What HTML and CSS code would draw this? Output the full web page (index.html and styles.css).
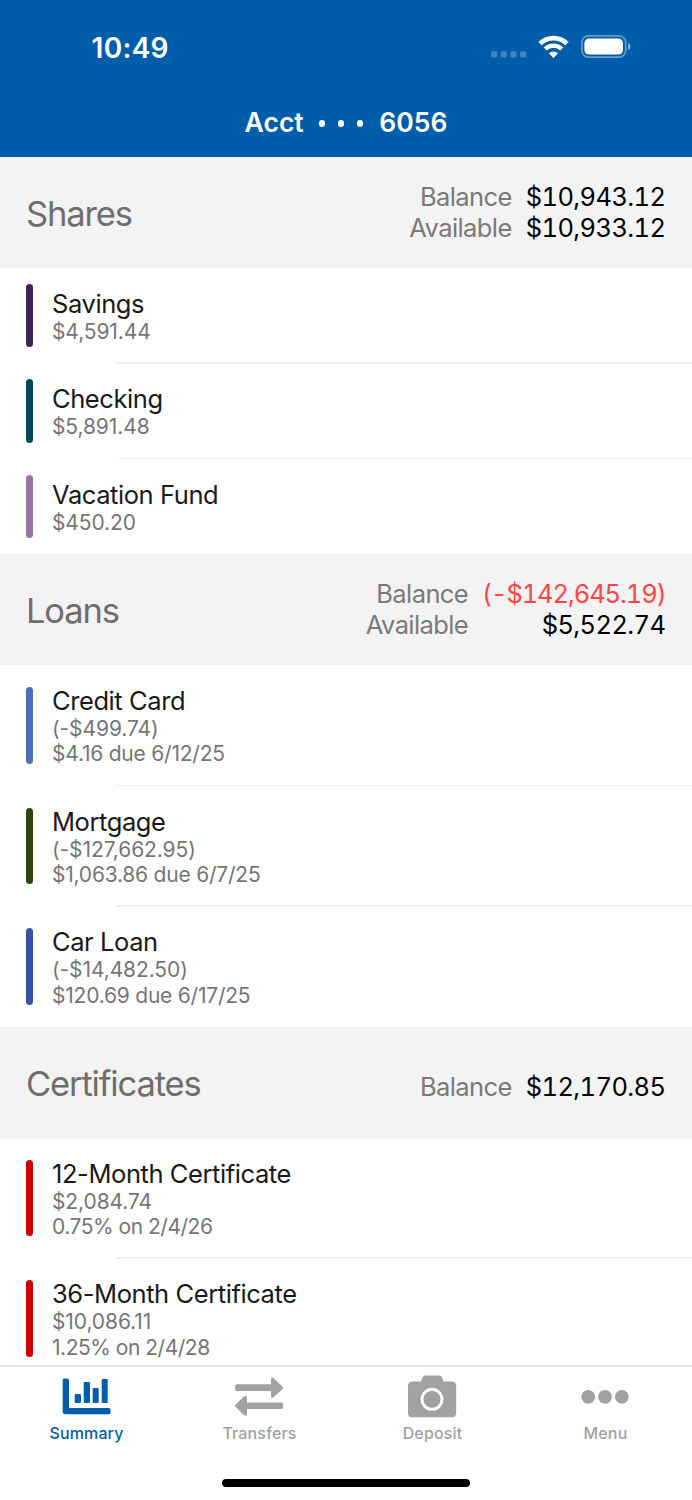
FILE: index.html
```html
<!DOCTYPE html>
<html lang="en">

<head>
    <meta charset="UTF-8">
    <meta name="viewport" content="width=device-width, initial-scale=1.0">
    <title>Account Summary</title>
    <link rel="stylesheet" href="styles.css">
</head>

<body>
    <header class="header">
        <div class="status-bar">
            <span class="time">10:49</span>
            <div class="status-icons">
                <svg class="signal" width="36" height="7" viewBox="0 0 36 7">
                    <rect x="0" y="0.3" width="6.3" height="6.3" rx="1.8"/>
                    <rect x="9.7" y="0.3" width="6.3" height="6.3" rx="1.8"/>
                    <rect x="19.4" y="0.3" width="6.3" height="6.3" rx="1.8"/>
                    <rect x="29.1" y="0.3" width="6.3" height="6.3" rx="1.8"/>
                </svg>
                <svg class="wifi" width="31" height="24" viewBox="0 0 31 24">
                    <path d="M2 8.6 A19.4 19.4 0 0 1 29 8.6" fill="none" stroke="#fff" stroke-width="4.8"/>
                    <path d="M7.2 14 A12 12 0 0 1 23.8 14" fill="none" stroke="#fff" stroke-width="4.4"/>
                    <path d="M10.9 18.3 Q15.5 14.6 20.1 18.3 L16.1 22.4 Q15.5 23 14.9 22.4 Z" fill="#fff"/>
                </svg>
                <svg class="battery" width="50" height="24" viewBox="0 0 50 24">
                    <rect x="0.9" y="0.9" width="43.8" height="21.3" rx="6.6" fill="none" stroke="#fff" stroke-opacity="0.4" stroke-width="1.7"/>
                    <rect x="3.4" y="3.6" width="38.6" height="16" rx="4.6" fill="#fff"/>
                    <path d="M47 8 Q49.4 8.8 49.4 11.5 Q49.4 14.4 47 15.2 Z" fill="#fff" fill-opacity="0.5"/>
                </svg>
            </div>
        </div>
        <h1 class="title"><span>Acct</span><span class="dots"><i></i><i></i><i></i></span><span>6056</span></h1>
    </header>

    <main class="accounts">
        <section>
            <div class="section-header">
                <h2>Shares</h2>
                <div class="totals">
                    <span class="label">Balance</span><span class="value">$10,943.12</span>
                    <span class="label">Available</span><span class="value">$10,933.12</span>
                </div>
            </div>
            <div class="row">
                <div class="bar savings"></div>
                <div class="info">
                    <h3>Savings</h3>
                    <p>$4,591.44</p>
                </div>
            </div>
            <div class="row">
                <div class="bar checking"></div>
                <div class="info">
                    <h3>Checking</h3>
                    <p>$5,891.48</p>
                </div>
            </div>
            <div class="row">
                <div class="bar vacation"></div>
                <div class="info">
                    <h3>Vacation Fund</h3>
                    <p>$450.20</p>
                </div>
            </div>
        </section>

        <section>
            <div class="section-header">
                <h2>Loans</h2>
                <div class="totals">
                    <span class="label">Balance</span><span class="value negative">(-$142,645.19)</span>
                    <span class="label">Available</span><span class="value">$5,522.74</span>
                </div>
            </div>
            <div class="row tall">
                <div class="bar credit"></div>
                <div class="info">
                    <h3>Credit Card</h3>
                    <p>(-$499.74)</p>
                    <p>$4.16 due 6/12/25</p>
                </div>
            </div>
            <div class="row tall">
                <div class="bar mortgage"></div>
                <div class="info">
                    <h3>Mortgage</h3>
                    <p>(-$127,662.95)</p>
                    <p>$1,063.86 due 6/7/25</p>
                </div>
            </div>
            <div class="row tall">
                <div class="bar car"></div>
                <div class="info">
                    <h3>Car Loan</h3>
                    <p>(-$14,482.50)</p>
                    <p>$120.69 due 6/17/25</p>
                </div>
            </div>
        </section>

        <section>
            <div class="section-header">
                <h2>Certificates</h2>
                <div class="totals single">
                    <span class="label">Balance</span><span class="value">$12,170.85</span>
                </div>
            </div>
            <div class="row tall">
                <div class="bar certificate"></div>
                <div class="info">
                    <h3>12-Month Certificate</h3>
                    <p>$2,084.74</p>
                    <p class="rate">0.75% on 2/4/26</p>
                </div>
            </div>
            <div class="row tall">
                <div class="bar certificate"></div>
                <div class="info">
                    <h3>36-Month Certificate</h3>
                    <p>$10,086.11</p>
                    <p class="rate">1.25% on 2/4/28</p>
                </div>
            </div>
        </section>
    </main>

    <footer class="footer">
        <nav class="tabs">
            <a class="tab active">
                <svg width="50" height="46" viewBox="0 0 50 46">
                    <path d="M3 5.5h3q2 0 2 2V35h40q1.500 0 1.500 1.500v3q0 1.800-1.800 1.800H4.500q-2.800 0-2.800-2.800V7.300q0-1.800 1.300-1.800z"/>
                    <rect x="13.700" y="21" width="6.300" height="9" rx="1.200"/>
                    <rect x="22.700" y="9" width="6.300" height="21" rx="1.200"/>
                    <rect x="31.700" y="15" width="6" height="15" rx="1.200"/>
                    <rect x="40.700" y="6" width="6" height="24" rx="1.200"/>
                </svg>
                <span>Summary</span>
            </a>
            <a class="tab">
                <svg width="50" height="46" viewBox="0 0 50 46">
                    <path d="M3 11.300H37V6.500q0-3 2.800-1.300l8.600 8.200q1.200 1.300 0 2.500l-8.600 8.200q-2.800 1.700-2.800-1.300V18H3q-1.800 0-1.800-1.800v-3.100q0-1.800 1.800-1.800z"/>
                    <path d="M47 29.400H13V24.600q0-3-2.800-1.300l-8.600 8.200q-1.200 1.300 0 2.500l8.600 8.200q2.800 1.700 2.800-1.300V36H47q2 0 2-1.800v-3q0-1.800-2-1.800z"/>
                </svg>
                <span>Transfers</span>
            </a>
            <a class="tab">
                <svg width="50" height="46" viewBox="0 0 50 46">
                    <path d="M5.500 8.500H14L15.600 4.500Q16.300 2.500 18.600 2.500H32Q34.300 2.500 35 4.500L36.600 8.500H44.600Q49.200 8.500 49.200 13V39.800Q49.200 44.300 44.600 44.300H5.500Q1 44.300 1 39.800V13Q1 8.500 5.500 8.500z"/>
                    <circle cx="25" cy="26.300" r="10" fill="none" stroke="#fff" stroke-width="2.900"/>
                </svg>
                <span>Deposit</span>
            </a>
            <a class="tab">
                <svg width="50" height="46" viewBox="0 0 50 46">
                    <circle cx="8.200" cy="23.800" r="6.900"/>
                    <circle cx="25" cy="23.800" r="6.900"/>
                    <circle cx="41.800" cy="23.800" r="6.900"/>
                </svg>
                <span>Menu</span>
            </a>
        </nav>
        <div class="home-indicator"></div>
    </footer>
</body>

</html>
```
FILE: styles.css
```css
* {
    box-sizing: border-box;
    margin: 0;
    padding: 0;
}

body {
    width: 692px;
    height: 1500px;
    overflow: hidden;
    display: flex;
    flex-direction: column;
    font-family: Inter, "Liberation Sans", sans-serif;
    background-color: #ffffff;
}

/* top bar */
.header {
    height: 157.3px;
    flex-shrink: 0;
    background-color: #005daa;
    color: #ffffff;
}

.status-bar {
    display: flex;
    justify-content: space-between;
    height: 96px;
    padding: 30px 61px 0 91.5px;
}

.time {
    font-size: 28px;
    font-weight: 600;
    line-height: 36px;
    letter-spacing: 0.3px;
}

.status-icons {
    display: flex;
    align-items: flex-start;
    padding-top: 5px;
}

.signal {
    margin-top: 16px;
    margin-right: 11px;
    fill: #ffffff;
    fill-opacity: 0.25;
}

.wifi {
    margin-right: 12px;
}

.title {
    display: flex;
    justify-content: center;
    font-size: 26.5px;
    font-weight: 600;
    line-height: 52px;
}

.dots {
    display: flex;
    align-items: center;
    gap: 12.8px;
    margin: 3px 16.5px 0 15px;
}

.dots i {
    width: 6.2px;
    height: 6.2px;
    border-radius: 50%;
    background-color: #ffffff;
}

/* account list */
.accounts {
    flex: 1;
    min-height: 0;
    overflow: hidden;
}

.section-header {
    display: flex;
    justify-content: space-between;
    height: 110.5px;
    padding: 0 26.5px 0 26px;
    background-color: #f3f3f3;
}

.section-header h2 {
    font-size: 34.5px;
    font-weight: 400;
    line-height: 113px;
    letter-spacing: -1.15px;
    color: #6e6e6e;
}

.totals {
    display: grid;
    grid-template-columns: auto auto;
    column-gap: 14px;
    align-content: start;
    padding-top: 24px;
    font-size: 25.5px;
    line-height: 31px;
    text-align: right;
}

.totals.single {
    padding-top: 43.5px;
}

.label {
    letter-spacing: -0.6px;
    color: #7a7a7a;
}

.value {
    letter-spacing: -0.6px;
    font-variant-numeric: tabular-nums;
    color: #000000;
}

.negative {
    letter-spacing: -1.1px;
    color: #ff4545;
}

.row {
    position: relative;
    display: flex;
    height: 95.5px;
    padding: 16px 26px;
}

.row.tall {
    height: 120.8px;
    padding: 22px 26px;
}

.row + .row::before {
    content: "";
    position: absolute;
    top: -1px;
    left: 116px;
    right: 0;
    height: 1.5px;
    background-color: #f0f0f0;
}

.bar {
    width: 6.5px;
    margin-right: 19.5px;
    border-radius: 3.5px;
}

.savings { background-color: #41215d; }
.checking { background-color: #00475f; }
.vacation { background-color: #9a73a5; }
.credit { background-color: #4a70ba; }
.mortgage { background-color: #2c470e; }
.car { background-color: #3953a9; }
.certificate { background-color: #cc0000; }

.info {
    margin-top: 4px;
}

.tall .info {
    margin-top: -2px;
}

.info h3 {
    font-size: 25.5px;
    font-weight: 400;
    line-height: 31px;
    letter-spacing: -0.42px;
    color: #1a1a1a;
}

.info p {
    font-size: 21px;
    line-height: 25.3px;
    letter-spacing: -0.1px;
    color: #767676;
}

.info p + p {
    letter-spacing: -0.22px;
}

.info p.rate {
    letter-spacing: -0.48px;
}

/* bottom tabs */
.footer {
    height: 135px;
    flex-shrink: 0;
    border-top: 2px solid #e5e5e5;
    background-color: #ffffff;
}

.tabs {
    display: flex;
    height: 112px;
}

.tab {
    flex: 1;
    display: flex;
    flex-direction: column;
    align-items: center;
    padding-top: 6px;
    font-size: 16px;
    font-weight: 500;
    line-height: 24px;
    letter-spacing: 0.15px;
    color: #a1a1a1;
    fill: #a1a1a1;
}

.tab svg {
    margin-right: 1.5px;
}

.tab span {
    margin-top: 2px;
}

.tab.active {
    color: #005daa;
    fill: #005daa;
}

.home-indicator {
    width: 248px;
    height: 8px;
    margin: 0 auto;
    border-radius: 4px;
    background-color: #000000;
}
```
